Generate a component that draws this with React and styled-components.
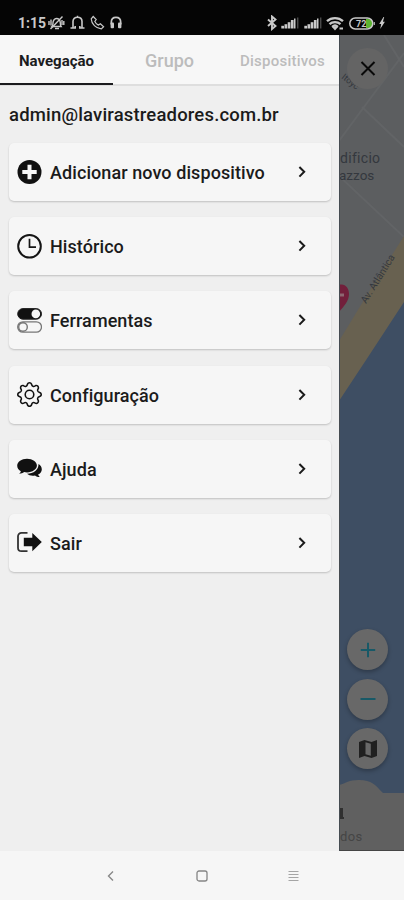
import React from 'react';
import styled, { createGlobalStyle } from 'styled-components';
import { BsGear } from 'react-icons/bs';

const GlobalStyle = createGlobalStyle`
    * {
        box-sizing: border-box;
    }
    body {
        margin: 0;
        background-color: #f6f6f6;
        font-family: Roboto, "Liberation Sans", sans-serif;
    }
`;

const Screen = styled.div`
    width: 404px;
    height: 900px;
    display: flex;
    flex-direction: column;
    overflow: hidden;
    background-color: #f6f6f6;
`;

const StatusBar = styled.header`
    height: 35px;
    flex-shrink: 0;
    display: flex;
    justify-content: space-between;
    align-items: flex-start;
    padding: 14px 19px 0 18px;
    background-color: #050505;
    color: #c9c9c9;
`;

const StatusGroup = styled.div`
    height: 18px;
    display: flex;
    align-items: center;
    gap: ${({ $gap }) => $gap}px;
`;

const Time = styled.span`
    width: 27px;
    margin-right: -2px;
    font-size: 14px;
    font-weight: 700;
    line-height: 18px;
    white-space: nowrap;
`;

const Main = styled.main`
    height: 816px;
    display: flex;
    flex-shrink: 0;
`;

const Drawer = styled.aside`
    width: 339px;
    flex-shrink: 0;
    display: flex;
    flex-direction: column;
    background-color: #efefef;
`;

const Tabs = styled.nav`
    height: 51px;
    display: grid;
    grid-template-columns: repeat(3, 113px);
    background-color: #f7f7f7;
    border-bottom: 2px solid #dedede;
`;

const Tab = styled.button`
    height: 50px;
    padding: 3px 0 0;
    border: 0;
    border-bottom: 2px solid ${({ $active }) => ($active ? '#1b1b1e' : 'transparent')};
    background: none;
    color: ${({ $active }) => ($active ? '#1c1c1e' : '#bcbcbc')};
    font-family: inherit;
    font-size: ${({ $size }) => $size}px;
    font-weight: ${({ $active }) => ($active ? 700 : 500)};
    letter-spacing: ${({ $spacing }) => $spacing || 0}px;
    white-space: nowrap;
`;

const Email = styled.div`
    height: 57px;
    padding: 17px 9px 0;
    color: #1b1b1b;
    font-size: 18.5px;
    font-weight: 500;
    letter-spacing: 0.17px;
    line-height: 24px;
    white-space: nowrap;
`;

const Menu = styled.div`
    display: flex;
    flex-direction: column;
    gap: 16.2px;
    padding: 0 8px 0 9px;
`;

const MenuCard = styled.button`
    height: 58px;
    display: flex;
    align-items: center;
    gap: 8px;
    padding: 0 23px 0 8px;
    border: 0;
    border-radius: 5px;
    background-color: #f6f6f6;
    box-shadow: 0 1px 2px rgba(0, 0, 0, 0.2);
    color: #111;
    font-family: inherit;

    svg {
        flex-shrink: 0;
    }
`;

const MenuLabel = styled.span`
    flex: 1;
    padding-top: 1px;
    color: #1b1b1b;
    font-size: 18px;
    font-weight: 500;
    letter-spacing: 0.08px;
    text-align: left;
    white-space: nowrap;
`;

const MapPane = styled.section`
    position: relative;
    width: 65px;
    display: flex;
    flex-direction: column;
    align-items: flex-start;
    padding: 13px 0 0 8px;
    overflow: hidden;
`;

const MapCanvas = styled.svg`
    position: absolute;
    top: 0;
    left: 0;
`;

const RoundButton = styled.button`
    position: relative;
    width: 41px;
    height: 41px;
    flex-shrink: 0;
    display: flex;
    align-items: center;
    justify-content: center;
    padding: 0;
    border: 0;
    border-radius: 50%;
    background-color: ${({ $flat }) => ($flat ? '#646464' : '#686868')};
    box-shadow: ${({ $flat }) => ($flat ? 'none' : '0 2px 4px rgba(0, 0, 0, 0.28)')};
`;

const ZoomControls = styled.div`
    display: flex;
    flex-direction: column;
    gap: 8.5px;
    margin-top: 540px;
`;

const SystemNav = styled.footer`
    height: 49px;
    display: flex;
    align-items: center;
    justify-content: center;
    gap: 79px;
    padding-top: 1px;
`;

const PlusCircleIcon = () => (
    <svg width="25" height="25" viewBox="0 0 25 25">
        <circle cx="12.5" cy="12" r="12" fill="#111" />
        <path d="M12.5 4.800v14.400M5.300 12h14.400" stroke="#f6f6f6" strokeWidth="4" />
    </svg>
);

const ClockIcon = () => (
    <svg width="25" height="25" viewBox="0 0 25 25" fill="none" stroke="#151515">
        <circle cx="12.5" cy="12.3" r="11.3" strokeWidth="2" />
        <path d="M12.5 4.800v8.300h6.500" strokeWidth="1.700" />
    </svg>
);

const TogglesIcon = () => (
    <svg width="25" height="25" viewBox="0 0 25 25">
        <rect x="0.7" y="0.6" width="23.800" height="10.600" rx="5.300" fill="#111" stroke="#222" />
        <circle cx="18.800" cy="5.900" r="4.300" fill="#f6f6f6" />
        <rect x="0.7" y="13.800" width="23.800" height="10.400" rx="5.200" fill="none" stroke="#777" strokeWidth="1.300" />
        <circle cx="6" cy="19" r="4.300" fill="none" stroke="#777" strokeWidth="1.400" />
    </svg>
);

const CommentsIcon = () => (
    <svg width="25" height="25" viewBox="0 0 25 25" fill="#111">
        <path d="M10 2.700C4.600 2.700.2 5.800.2 9.700c0 2.300 1.500 4.200 3.700 5.500-.3 1-.9 1.800-1.800 2.600 2 0 3.800-.7 5-1.700.9.2 1.900.3 2.900.3 5.500 0 9.900-3 9.900-6.800S15.500 2.700 10 2.700z" />
        <path d="M21.500 8c.3 5.800-5 9.700-11.500 9.800 1.800 1.600 5.200 2.300 8 1.600 1.300 1.100 2.900 1.600 4.800 1.600-.9-.8-1.400-1.600-1.700-2.500 2.200-1.100 3.700-2.900 3.700-5.100 0-2.200-1.200-4.200-3.300-5.400z" />
    </svg>
);

const ExitIcon = () => (
    <svg width="25" height="25" viewBox="0 0 25 25">
        <path d="M10.500 2.800H4.500C2.500 2.800 1 4.300 1 6.300v11.400c0 2 1.500 3.500 3.500 3.500h6" fill="none" stroke="#333" strokeWidth="1.800" />
        <path d="M6.800 7.800h8.500V3L24.800 12l-9.500 9.200v-4.900H6.800z" fill="#111" />
    </svg>
);

const ChevronIcon = () => (
    <svg width="12" height="14" viewBox="0 0 12 14">
        <path d="M3.400 2l4.800 4.800L3.400 11.600" fill="none" stroke="#1b1b1b" strokeWidth="2" />
    </svg>
);

const MuteIcon = () => (
    <svg width="17" height="16" viewBox="0 0 17 16" fill="none" stroke="currentColor" strokeWidth="1.400">
        <path d="M4 11.500c1.300-1.200.7-3.200 1.200-5C5.800 4.500 7 3.500 8.700 3.500s3 1.200 3.400 3c.4 1.700 0 3.500 1 5z" />
        <path d="M7 13.500h4M1 6v4M3 4.500v6M15.800 6v4M14 5v5M2.500 14l12-12.500" />
    </svg>
);

const BellIcon = () => (
    <svg width="15" height="16" viewBox="0 0 15 16" fill="none" stroke="currentColor" strokeWidth="1.600">
        <path d="M.5 13h4.700v-2M14.500 13H9.800v-2M3 13V6.500C3 3.800 4.800 2.200 7.500 2.200S12 3.800 12 6.500V13M7.500 .7v1.500" />
    </svg>
);

const PhoneIcon = () => (
    <svg width="15" height="16" viewBox="0 0 15 16" fill="none" stroke="currentColor" strokeWidth="1.200">
        <path d="M1.200 3.800l2-2.300 3 3-1.400 2c.8 1.600 2 2.800 3.600 3.600l2-1.400 3.200 3-2.300 2.200C6 13.500 1.500 9 1.200 3.800z" />
    </svg>
);

const HeadphonesIcon = () => (
    <svg width="12" height="14" viewBox="0 0 12 14">
        <path d="M1.300 8.500V6.200C1.300 3.300 3.200 1.300 6 1.300s4.700 2 4.700 4.900v2.300" fill="none" stroke="currentColor" strokeWidth="1.700" />
        <rect x="0.600" y="6.500" width="3.400" height="5.700" rx="1" fill="currentColor" />
        <rect x="8" y="6.500" width="3.400" height="5.700" rx="1" fill="currentColor" />
    </svg>
);

const BluetoothIcon = () => (
    <svg width="10" height="16" viewBox="0 0 10 16">
        <path d="M1 4.500l7.500 6.500L5 14V1.500l3.500 3L1 11" fill="none" stroke="currentColor" strokeWidth="1.900" />
    </svg>
);

const SignalIcon = () => (
    <svg width="18" height="12" viewBox="0 0 18 12" fill="currentColor">
        <rect x="0.300" y="8.800" width="2.700" height="2.700" />
        <rect x="3.500" y="7.200" width="2.700" height="4.300" />
        <rect x="6.700" y="5.200" width="2.700" height="6.300" />
        <rect x="9.900" y="3" width="2.700" height="8.500" />
        <rect x="13" y="1.500" width="1.500" height="10" />
        <rect x="16.300" y="0.500" width="1" height="11" opacity="0.5" />
    </svg>
);

const WifiIcon = () => (
    <svg width="18" height="15" viewBox="0 0 18 15" fill="none" stroke="currentColor" strokeWidth="2.300">
        <path d="M1 5.200c4.500-4.200 11.500-4.200 16 0M3.500 8.200c3-2.900 8-2.900 11 0M6.200 10.800c1.600-1.500 4-1.500 5.600 0" />
        <path d="M7.500 11.500L9 13.200l1.500-1.700zM13.500 12.500H17" strokeWidth="1.800" />
    </svg>
);

const BatteryIcon = () => (
    <svg width="26" height="13" viewBox="0 0 26 13">
        <path d="M17 2h2.500a4 4 0 0 1 0 9H17z" fill="#5cb531" />
        <rect x="0.800" y="1" width="23" height="11" rx="5.500" fill="none" stroke="currentColor" strokeWidth="1.500" />
        <path d="M25.300 5v3" stroke="currentColor" strokeWidth="1" />
        <text x="7" y="10" fill="currentColor" fontFamily="Roboto, sans-serif" fontSize="9" fontWeight="700">72</text>
    </svg>
);

const BoltIcon = () => (
    <svg width="6" height="12" viewBox="0 0 6 12" fill="currentColor">
        <path d="M4.500 0L.2 7h2L1.200 12 5.900 4.800H3.900L5.200 0z" />
    </svg>
);

const CloseIcon = () => (
    <svg width="16" height="16" viewBox="0 0 16 16">
        <path d="M1.500 1l13 13M14.500 1l-13 13" stroke="#090909" strokeWidth="2" />
    </svg>
);

const ZoomIcon = ({ plus }) => (
    <svg width="16" height="16" viewBox="0 0 16 16">
        <path d={plus ? 'M8 .8v14.400M.8 8h14.400' : 'M.5 8h15'} stroke="#185967" strokeWidth="2" />
    </svg>
);

const FoldedMapIcon = () => (
    <svg width="20" height="20" viewBox="0 0 20 20">
        <path d="M1 3l5.500-2 7 2L19 1v16l-5.500 2-7-2L1 19z" fill="#202020" />
        <path d="M7.500 3.200l5.300 1.600v12l-5.300-1.600z" fill="#686868" />
    </svg>
);

const MapDrawing = () => (
    <MapCanvas width="65" height="816" viewBox="0 0 65 816">
        <rect width="65" height="816" fill="#5c5e60" />
        <g fill="none" stroke="#626466" strokeWidth="2">
            <path d="M0 106l25-34 40-54M0 141l65 61M23 72l42 40M45 0l20 32" />
        </g>
        <path d="M65 201L39 242 0 306v510h65z" fill="#686150" />
        <path d="M65 267L31 319 0 366v450h65z" fill="#3e4e63" />
        <path d="M0 250c6-2 10 3 10 9 0 7-5 12-10 18z" fill="#721f3b" />
        <path d="M0 260h5" stroke="#8d6771" strokeWidth="3" />
        <g fill="#34383e" fontFamily="Roboto, sans-serif">
            <text x="1" y="128" fontSize="14" letterSpacing="0.3">dificio</text>
            <text x="0" y="145" fontSize="13.500">azzos</text>
            <text x="2" y="43" fontSize="9" transform="rotate(38 2 43)">Itoyc</text>
            <text x="27" y="269" fontSize="10" transform="rotate(-58 27 269)">Av. Atlântica</text>
        </g>
        <path d="M0 750c8-2 9-5 20-5 13 0 16 5 24 13h21v58H0z" fill="#606060" />
        <path d="M1 773h3v9h1v2H1z" fill="#303030" />
        <text x="1" y="806" fill="#454545" fontFamily="Roboto, sans-serif" fontSize="13" letterSpacing="0.400">dos</text>
        <path d="M0 815.500h65" stroke="#454545" />
        <path d="M.5 0v816" stroke="#454b51" />
    </MapCanvas>
);

const menuItems = [
    { label: 'Adicionar novo dispositivo', icon: <PlusCircleIcon /> },
    { label: 'Histórico', icon: <ClockIcon /> },
    { label: 'Ferramentas', icon: <TogglesIcon /> },
    { label: 'Configuração', icon: <BsGear size={25} /> },
    { label: 'Ajuda', icon: <CommentsIcon /> },
    { label: 'Sair', icon: <ExitIcon /> },
];

export default function App() {
    return (
        <Screen>
            <GlobalStyle />
            <StatusBar>
                <StatusGroup $gap={5}>
                    <Time>1:15</Time>
                    <MuteIcon />
                    <BellIcon />
                    <PhoneIcon />
                    <HeadphonesIcon />
                </StatusGroup>
                <StatusGroup $gap={4.4}>
                    <BluetoothIcon />
                    <SignalIcon />
                    <SignalIcon />
                    <WifiIcon />
                    <BatteryIcon />
                    <BoltIcon />
                </StatusGroup>
            </StatusBar>
            <Main>
                <Drawer>
                    <Tabs>
                        <Tab $active $size={15}>Navegação</Tab>
                        <Tab $size={18}>Grupo</Tab>
                        <Tab $size={15} $spacing={0.25}>Dispositivos</Tab>
                    </Tabs>
                    <Email>admin@lavirastreadores.com.br</Email>
                    <Menu>
                        {menuItems.map((item) => (
                            <MenuCard key={item.label}>
                                {item.icon}
                                <MenuLabel>{item.label}</MenuLabel>
                                <ChevronIcon />
                            </MenuCard>
                        ))}
                    </Menu>
                </Drawer>
                <MapPane>
                    <MapDrawing />
                    <RoundButton $flat aria-label="Fechar"><CloseIcon /></RoundButton>
                    <ZoomControls>
                        <RoundButton><ZoomIcon plus /></RoundButton>
                        <RoundButton><ZoomIcon /></RoundButton>
                        <RoundButton><FoldedMapIcon /></RoundButton>
                    </ZoomControls>
                </MapPane>
            </Main>
            <SystemNav>
                <svg width="12" height="14" viewBox="0 0 12 14">
                    <path d="M8 2.500L3.500 7 8 11.500" fill="none" stroke="#888" strokeWidth="1.400" />
                </svg>
                <svg width="12" height="12" viewBox="0 0 12 12">
                    <rect x="1" y="1" width="10" height="10" rx="2" fill="none" stroke="#858585" strokeWidth="1.300" />
                </svg>
                <svg width="12" height="12" viewBox="0 0 12 12">
                    <path d="M1.500 1.500h10M1.500 4.500h10M1.500 7.500h10M1.500 10.500h10" stroke="#a5a5a5" strokeWidth="1.200" />
                </svg>
            </SystemNav>
        </Screen>
    );
}
